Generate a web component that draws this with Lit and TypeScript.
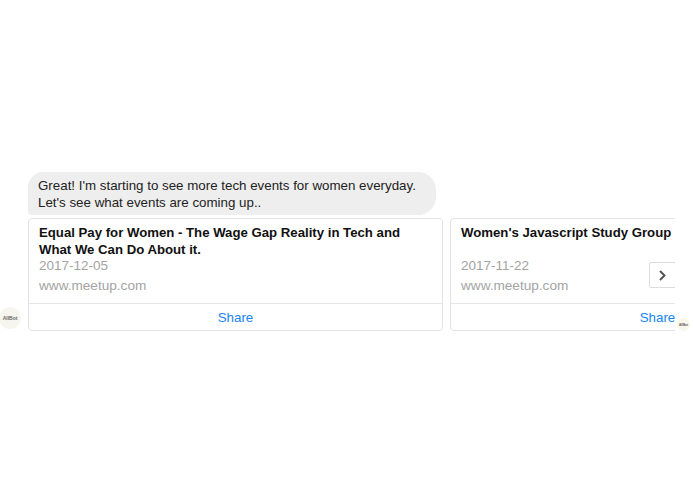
import { LitElement, html, css } from 'lit';
import { customElement } from 'lit/decorators.js';

interface EventCard {
  title: string;
  date: string;
  site: string;
}

const EVENTS: EventCard[] = [
  {
    title: 'Equal Pay for Women - The Wage Gap Reality in Tech and What We Can Do About it.',
    date: '2017-12-05',
    site: 'www.meetup.com',
  },
  {
    title: "Women's Javascript Study Group",
    date: '2017-11-22',
    site: 'www.meetup.com',
  },
];

@customElement('app-root')
export class AppRoot extends LitElement {
  static styles = css`
    :host {
      display: block;
      width: 695px;
      height: 494px;
      overflow: hidden;
      background: #fff;
      font-family: 'Liberation Sans', Arial, sans-serif;
      color: #111;
    }
    .thread {
      display: flex;
      flex-direction: column;
      gap: 3px;
      padding: 172px 0 0 28px;
    }
    .bubble {
      box-sizing: border-box;
      width: 408px;
      height: 43px;
      padding: 5px 10px;
      border-radius: 15px 18px 18px 4px;
      background: #eeeeee;
      font-size: 13.33px;
      line-height: 17px;
      color: #222;
    }
    .row {
      display: flex;
      align-items: flex-end;
      margin-left: -29px;
    }
    .avatar {
      flex: none;
      display: flex;
      align-items: center;
      justify-content: center;
      width: 22px;
      height: 22px;
      margin: 0 7px 2px 0;
      border-radius: 50%;
      background: #f7f6ee;
      font-size: 5px;
      font-weight: bold;
      color: #666;
    }
    .carousel {
      display: flex;
      gap: 7px;
      width: 647px;
      flex: none;
      overflow: hidden;
    }
    .card {
      flex: none;
      box-sizing: border-box;
      position: relative;
      width: 415px;
      height: 113px;
      display: flex;
      flex-direction: column;
      border: 1px solid #e3e3e3;
      border-radius: 4px;
    }
    .body {
      flex: 1;
      display: flex;
      flex-direction: column;
      padding: 5px 10px 0;
    }
    .title {
      height: 33px;
      font-size: 13.2px;
      line-height: 17px;
      font-weight: bold;
      color: #111;
    }
    .date,
    .site {
      font-size: 13.5px;
      line-height: 17px;
      color: #a3a3a3;
    }
    .site {
      margin-top: 3px;
      font-size: 13.6px;
    }
    .share {
      height: 26px;
      border-top: 1px solid #e6e6e6;
      text-align: center;
      font-size: 13.33px;
      line-height: 27px;
      color: #1785f2;
    }
    .next {
      position: absolute;
      left: 198px;
      top: 43px;
      box-sizing: border-box;
      width: 27px;
      height: 26px;
      display: flex;
      align-items: center;
      justify-content: center;
      background: #fff;
      border: 1px solid #dcdcdc;
      border-radius: 2px;
    }
    .tiny {
      flex: none;
      display: flex;
      align-items: center;
      justify-content: center;
      width: 13px;
      height: 13px;
      margin: 0 0 0 2px;
      border-radius: 50%;
      background: #fbf6ea;
      font-size: 3px;
      font-weight: bold;
      color: #555;
    }
  `;

  renderCard(e: EventCard, last: boolean) {
    return html`
      <div class="card">
        <div class="body">
          <div class="title">${e.title}</div>
          <div class="date">${e.date}</div>
          <div class="site">${e.site}</div>
        </div>
        <div class="share">Share</div>
        ${last
          ? html`<div class="next">
              <svg width="9" height="11" viewBox="0 0 9 11">
                <path d="M2 1l4.5 4.5L2 10" fill="none" stroke="#555" stroke-width="2" />
              </svg>
            </div>`
          : ''}
      </div>
    `;
  }

  render() {
    return html`
      <div class="thread">
        <div class="bubble">
          Great! I'm starting to see more tech events for women everyday.<br />
          Let's see what events are coming up..
        </div>
        <div class="row">
          <div class="avatar">AllBot</div>
          <div class="carousel">
            ${EVENTS.map((e, i) => this.renderCard(e, i === EVENTS.length - 1))}
          </div>
          <div class="tiny">AllBot</div>
        </div>
      </div>
    `;
  }
}
